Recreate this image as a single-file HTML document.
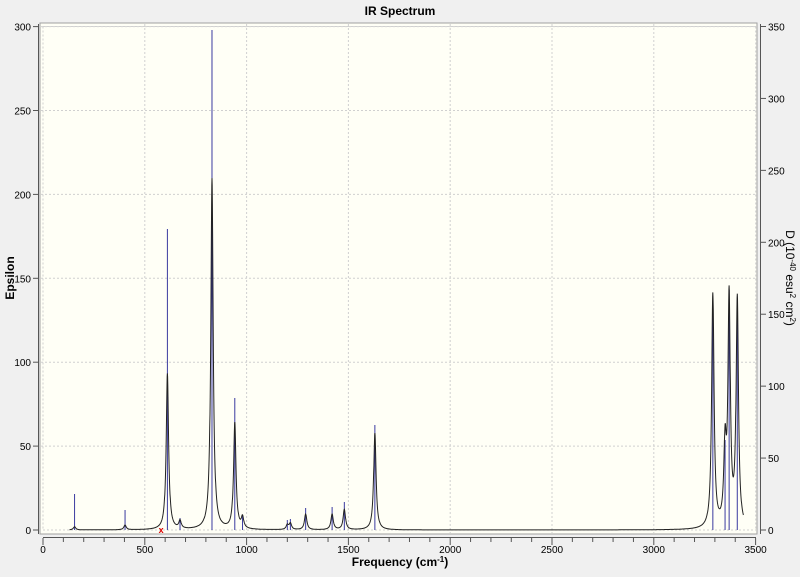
<!DOCTYPE html><html><head><style>body{margin:0;background:#f0f0f0;width:800px;height:572px;overflow:hidden;font-family:"Liberation Sans",sans-serif}</style></head><body>
<svg id="s" width="800" height="572" xmlns="http://www.w3.org/2000/svg" font-family="Liberation Sans, sans-serif" font-size="11">
<rect x="40" y="23" width="717" height="511" fill="#fffff6" stroke="#a0a0a0"/>
<text x="400" y="15" text-anchor="middle" font-weight="bold" font-size="12">IR Spectrum</text>
<text transform="translate(14,278) rotate(-90)" text-anchor="middle" font-size="12" font-weight="bold">Epsilon</text>
<text transform="translate(786,278) rotate(90)" text-anchor="middle" font-size="12">D (10<tspan font-size="8" dy="-4">-40</tspan><tspan dy="4"> esu</tspan><tspan font-size="8" dy="-4">2</tspan><tspan dy="4"> cm</tspan><tspan font-size="8" dy="-4">2</tspan><tspan dy="4">)</tspan></text>
<text x="400" y="566" text-anchor="middle" font-weight="bold" font-size="12">Frequency (cm<tspan font-size="8" dy="-4">-1</tspan><tspan dy="4">)</tspan></text>
<g id="g"></g>
</svg>
<script>
var g=document.getElementById('g'),o='';
function X(f){return 43+f*0.2036}function Y(e){return 530-e*1.678}
var gs='stroke="#d0d0d0" stroke-dasharray="2,2"';
for(var f=500;f<=3000;f+=500)o+='<line x1="'+X(f)+'" y1="24" x2="'+X(f)+'" y2="533" '+gs+'/>';
for(var e=50;e<=300;e+=50)o+='<line x1="41" y1="'+Y(e)+'" x2="756" y2="'+Y(e)+'" '+gs+'/>';
o+='<line x1="43" y1="26.5" x2="43" y2="530" '+gs+'/><line x1="43" y1="530" x2="756" y2="530" '+gs+'/><line x1="43" y1="26.5" x2="756" y2="26.5" '+gs+'/><line x1="755.7" y1="26.5" x2="755.7" y2="530" '+gs+'/>';
o+='<line x1="38.5" y1="24" x2="38.5" y2="534" stroke="#555"/><line x1="43" y1="537.5" x2="756" y2="537.5" stroke="#555"/><line x1="760.5" y1="24" x2="760.5" y2="534" stroke="#555"/>';
for(e=0;e<=300;e+=50){o+='<line x1="33" y1="'+Y(e)+'" x2="38" y2="'+Y(e)+'" stroke="#555"/><text x="31" y="'+(Y(e)+4)+'" text-anchor="end" font-size="10">'+e+'</text>';}
for(var d=0;d<=350;d+=50){var y=530-d*503.5/350;o+='<line x1="761" y1="'+y+'" x2="766" y2="'+y+'" stroke="#555"/><text x="768" y="'+(y+4)+'" font-size="10">'+d+'</text>';}
for(f=0;f<=3500;f+=100){var big=f%500==0;o+='<line x1="'+X(f)+'" y1="538" x2="'+X(f)+'" y2="'+(big?545:542)+'" stroke="#555"/>';if(big)o+='<text x="'+X(f)+'" y="553" text-anchor="middle" font-size="10">'+f+'</text>';}
var P=[[155,2,494],[403,3,510],[611,100,229],[673,5,518],[830,225,30],[942,68,398],[980,7,515],[1200,3,520],[1215,4,519],[1290,10,508],[1420,10,507],[1480,13,502],[1630,62,425],[3290,150,300],[3350,48,440],[3370,146,290],[3410,146,300]];
P.forEach(function(p){o+='<line x1="'+X(p[0])+'" y1="530" x2="'+X(p[0])+'" y2="'+p[2]+'" stroke="#3a3aa0"/>';});
var w=7,pts=[];
for(f=130;f<=3440;f+=1){var s=0;P.forEach(function(p){s+=p[1]/(1+Math.pow((f-p[0])/w,2))*0.93;});pts.push(X(f).toFixed(1)+','+Y(s).toFixed(1));}
o+='<polyline points="'+pts.join(' ')+'" fill="none" stroke="#222" stroke-width="1"/>';
o+='<text x="'+X(580)+'" y="533" text-anchor="middle" fill="#d00" font-size="9" font-weight="bold">x</text>';
g.innerHTML=o;
</script>
</body></html>
